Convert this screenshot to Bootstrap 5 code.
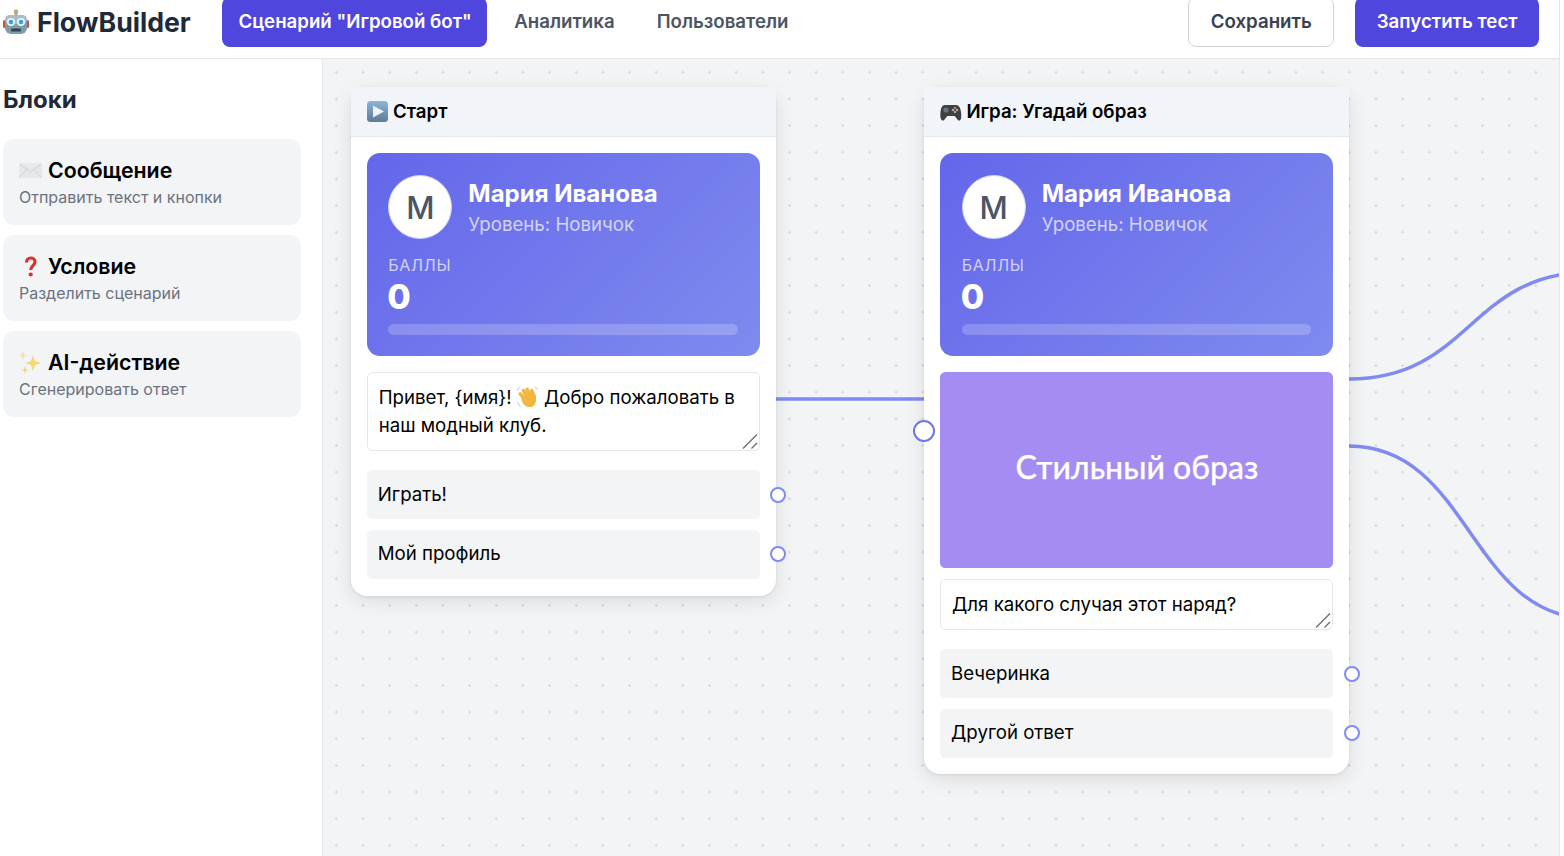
<!DOCTYPE html>
<html lang="ru">
<head>
<meta charset="utf-8">
<title>FlowBuilder</title>
<link href="https://cdn.jsdelivr.net/npm/bootstrap@5.3.0/dist/css/bootstrap.min.css" rel="stylesheet">
<style>
html,body{height:100%;overflow:hidden;background:#fff}
body{font-family:Inter,"Liberation Sans",sans-serif;color:#1f2937}
.app-frame{width:1560px;height:856px;border-right:1px solid #e5e7eb;overflow:hidden}
.top-bar{height:59px;border-bottom:1px solid #e5e7eb;padding:0 20px 0 3px;background:#fff;overflow:hidden}
.logo-mark{font-size:26.67px;font-weight:700;color:#1f2937;width:219px;line-height:1;padding-top:9px;gap:8px}
.top-btn{font-size:18.67px;font-weight:600;height:50px;margin-top:-3px;padding:0 21px;border-radius:8px;display:flex;align-items:center;border:1px solid transparent;line-height:1}
.top-btn.brand{background:#4f46de;color:#fff}
.top-btn.brand.scenario{padding:0 14.5px 0 15.5px}
.top-btn.plain{color:#4b5563;padding:0 21px;background:none}
.top-btn.plain.after-brand{margin-left:5px;padding-right:19px}
.top-btn.outline{background:#fff;border-color:#d1d5db;color:#374151;padding:0 21.5px}
.top-btn.launch{margin-left:21px;padding:0 20.5px}
.work-area{height:797px}
.side-panel{width:323px;border-right:1px solid #e5e7eb;padding:0 21px 0 3px;background:#fff;flex:none}
.side-title{font-size:24px;font-weight:700;line-height:1;margin:29px 0 27px;color:#1f2937;height:24px}
.block-item{background:#f3f4f6;border-radius:10.67px;height:86px;padding:16px 16px 0;margin-bottom:10px}
.block-name{font-size:21.33px;font-weight:600;color:#000;line-height:30px;gap:6px}
.block-icon{width:23px;height:23px;flex:none}
.block-sub{font-size:16px;color:#6b7280;line-height:24px}
.flow-canvas{position:relative;flex:1;background-color:#f3f4f6;background-image:radial-gradient(circle,#d3d6db 1.2px,transparent 1.4px);background-size:26.667px 26.667px;overflow:hidden}
.wire-layer{position:absolute;left:0;top:0;width:1236px;height:797px}
.flow-node{position:absolute;width:425px;background:#fff;border-radius:16px;box-shadow:0 5px 20px rgba(0,0,0,.1),0 1px 3px rgba(0,0,0,.08)}
.node-one{left:28px;top:28px;height:509px}
.node-two{left:601.4px;top:28px;height:687px}
.node-head{height:50px;background:#f1f4f9;border-bottom:1px solid #e5e7eb;padding:0 16px;font-size:18.67px;font-weight:600;color:#000;gap:4px}
.node-head svg{width:23px;height:23px;flex:none;margin-left:-1px}
.node-body{padding:16px}
.profile-box{height:203px;border-radius:13px;background:linear-gradient(135deg,#6466ea,#7f8bef);padding:22px 21.33px 0;color:#fff}
.avatar-disc{width:64px;height:64px;border-radius:50%;background:#fff;border:1px solid #c7d2fe;box-shadow:inset 0 0 0 1px #fff;color:#4b5563;font-size:31px;font-weight:500;flex:none;line-height:1;padding-top:1px}
.profile-name{font-size:24px;font-weight:700;line-height:32px;margin-top:3px}
.profile-level{font-size:18.67px;line-height:28px;margin-top:1px;color:rgba(255,255,255,.7)}
.score-label{font-size:16px;letter-spacing:.7px;line-height:20px;margin-top:16px;color:rgba(255,255,255,.7)}
.score-value{font-size:34px;font-weight:800;line-height:42px;margin-top:1px;margin-left:-1px}
.score-track{height:11px;border-radius:6px;background:rgba(255,255,255,.2);margin-top:6px;margin-right:1px}
.msg-field{position:relative;border:1px solid #e5e7eb;border-radius:5.33px;background:#fff;margin-top:16px;padding:11px 10.67px 0;font-size:18.67px;line-height:28px;color:#000}
.msg-long{height:79px}
.msg-short{height:51px;margin-top:11px}
.grip-mark{position:absolute;right:1px;bottom:1px;width:16px;height:16px}
.hand-mark{width:22px;height:22px;vertical-align:-4px}
.choice-row{position:relative;height:49px;background:#f3f4f6;border-radius:5.33px;padding:0 10.67px;font-size:18.67px;line-height:48.4px;color:#000;margin-top:10.67px}
.choice-row.first-one{margin-top:19px;line-height:49px}
.choice-port{position:absolute;right:-26.33px;top:16.5px;width:16px;height:16px;border-radius:50%;background:#fff;border:2px solid #7f8bf2}
.entry-port{position:absolute;left:-11px;top:333px;width:22px;height:22px;border-radius:50%;background:#fff;border:2.67px solid #6f73ee}
.picture-box{height:196px;background:#a58cf3;border-radius:5.33px;margin-top:16px;padding-bottom:6px;color:#fff;font-family:Lato,sans-serif;font-size:32px;font-weight:500;-webkit-text-stroke:.25px #fff}
</style>
</head>
<body>
<div class="app-frame">
  <header class="top-bar d-flex align-items-start">
    <div class="logo-mark d-flex align-items-center">
      <svg width="26" height="26" viewBox="0 0 26 26"><rect x="0" y="11" width="3" height="8" rx="1.5" fill="#c8523c"/><rect x="23" y="11" width="3" height="8" rx="1.5" fill="#c8523c"/><circle cx="13" cy="2.500" r="2.200" fill="#e8a33d"/><rect x="11.500" y="3" width="3" height="4" fill="#9aa9b2"/><rect x="2" y="6" width="22" height="19" rx="6" fill="#7f9cab"/><rect x="2" y="6" width="22" height="9" rx="5" fill="#a9bcc6"/><circle cx="8" cy="13" r="4" fill="#e9f2f6"/><circle cx="18" cy="13" r="4" fill="#e9f2f6"/><circle cx="8" cy="13" r="2.300" fill="#2fa8d8"/><circle cx="18" cy="13" r="2.300" fill="#2fa8d8"/><rect x="8" y="19.500" width="10" height="3" rx="1" fill="#33454f"/></svg>
      <span>FlowBuilder</span>
    </div>
    <a class="top-btn brand scenario text-decoration-none">Сценарий "Игровой бот"</a>
    <a class="top-btn plain after-brand text-decoration-none">Аналитика</a>
    <a class="top-btn plain text-decoration-none">Пользователи</a>
    <button type="button" class="top-btn outline ms-auto">Сохранить</button>
    <button type="button" class="top-btn brand launch">Запустить тест</button>
  </header>
  <div class="work-area d-flex">
    <aside class="side-panel">
      <h2 class="side-title">Блоки</h2>
      <div class="block-item">
        <div class="block-name d-flex align-items-center">
          <svg class="block-icon" viewBox="0 0 23 23"><rect x="0" y="4" width="23" height="15" rx="1.500" fill="#e7e8ea"/><path d="M.5 5 11.500 13 22.500 5M.5 18.500 8 10M22.500 18.500 15 10" fill="none" stroke="#cfd1d5"/></svg>
          <span>Сообщение</span>
        </div>
        <div class="block-sub">Отправить текст и кнопки</div>
      </div>
      <div class="block-item">
        <div class="block-name d-flex align-items-center">
          <svg class="block-icon" viewBox="0 0 23 23"><path d="M7.500 7.500C7.500 4.500 9.500 3 11.700 3S16 4.500 16 7c0 3.500-4.300 3.700-4.300 8" fill="none" stroke="#d8322a" stroke-width="3.200"/><circle cx="11.700" cy="19.500" r="2.100" fill="#d8322a"/></svg>
          <span>Условие</span>
        </div>
        <div class="block-sub">Разделить сценарий</div>
      </div>
      <div class="block-item">
        <div class="block-name d-flex align-items-center">
          <svg class="block-icon" viewBox="0 0 23 23"><path d="M14 4 16 10 22 12 16 14 14 20 12 14 6 12 12 10Z" fill="#f6d873"/><path d="M4 0 5 3.500 8 4.500 5 5.500 4 9 3 5.500 0 4.500 3 3.500Z" fill="#f8e19a"/><path d="M6 15 6.800 18.200 10 19 6.800 19.800 6 23 5.200 19.800 2 19 5.200 18.200Z" fill="#f3d06a"/></svg>
          <span>AI-действие</span>
        </div>
        <div class="block-sub">Сгенерировать ответ</div>
      </div>
    </aside>
    <main class="flow-canvas">
      <svg class="wire-layer" viewBox="0 0 1236 797" fill="none" stroke="#7f8bf2" stroke-width="3.500">
        <path d="M450 340H604"/>
        <path d="M1026 320C1147 320 1147 213.300 1267 213.300"/>
        <path d="M1026 387C1147 387 1147 559.300 1267 559.300"/>
      </svg>
      <section class="flow-node node-one">
        <div class="node-head d-flex align-items-center">
          <svg viewBox="0 0 23 23"><defs><linearGradient id="playfill" x1="0" y1="0" x2="0" y2="1"><stop offset="0" stop-color="#8fb4d8"/><stop offset="1" stop-color="#5f7a94"/></linearGradient></defs><rect x="1" y="1" width="21" height="21" rx="3.500" fill="url(#playfill)"/><path d="M7 5.500 18 11.500 7 17.500Z" fill="#eef3f8"/></svg>
          <span>Старт</span>
        </div>
        <div class="node-body">
          <div class="profile-box">
            <div class="d-flex gap-3">
              <div class="avatar-disc d-flex align-items-center justify-content-center">M</div>
              <div>
                <div class="profile-name">Мария Иванова</div>
                <div class="profile-level">Уровень: Новичок</div>
              </div>
            </div>
            <div class="score-label">БАЛЛЫ</div>
            <div class="score-value">0</div>
            <div class="score-track"></div>
          </div>
          <div class="msg-field msg-long">
            <div>Привет, {имя}! <svg class="hand-mark" viewBox="0 0 24 24"><g stroke="#f2b63f" stroke-width="3.800" stroke-linecap="round"><path d="M8 14 3.500 8.500M11.500 13 7 5M15 12 11 3.500M19 12 16 5"/></g><path d="M5 12C4 18 9 23.500 14.500 23s7-6 6-12.500l-3.500 2-6-1Z" fill="#f2b63f"/><path d="M1 18c.5 2 1.500 3.500 3 4.500M.5 5C1 3 2 2 3.500 1M19.500 1c1.500.5 2.500 1.500 3 3" stroke="#b9bdc4" fill="none"/></svg> <span>Добро пожаловать в</span></div>
            <div>наш модный клуб.</div>
            <svg class="grip-mark" viewBox="0 0 16 16"><path d="M1 15.500 15 1.500M9.500 15.500 15 10" stroke="#6b6b6b" stroke-width="1.300"/></svg>
          </div>
          <div class="choice-row first-one">Играть!<span class="choice-port"></span></div>
          <div class="choice-row">Мой профиль<span class="choice-port"></span></div>
        </div>
      </section>
      <section class="flow-node node-two">
        <span class="entry-port"></span>
        <div class="node-head d-flex align-items-center">
          <svg viewBox="0 0 23 23"><path d="M6 5h11c3 0 4.500 3 5 7 .5 4 .5 8-1.500 8.500-2 .5-3.500-3.500-5-4.500H8.500c-1.500 1-3 5-5 4.500S1 16 1.500 12C2 8 3 5 6 5Z" fill="#3d4142"/><circle cx="7" cy="10" r="2.600" fill="#6e7374"/><circle cx="16" cy="8" r="1.200" fill="#e8743b"/><circle cx="18" cy="10" r="1.200" fill="#a9adad"/><circle cx="14" cy="10" r="1.200" fill="#a9adad"/><circle cx="16" cy="12" r="1.200" fill="#a9adad"/></svg>
          <span>Игра: Угадай образ</span>
        </div>
        <div class="node-body">
          <div class="profile-box">
            <div class="d-flex gap-3">
              <div class="avatar-disc d-flex align-items-center justify-content-center">M</div>
              <div>
                <div class="profile-name">Мария Иванова</div>
                <div class="profile-level">Уровень: Новичок</div>
              </div>
            </div>
            <div class="score-label">БАЛЛЫ</div>
            <div class="score-value">0</div>
            <div class="score-track"></div>
          </div>
          <div class="picture-box d-flex align-items-center justify-content-center">Стильный образ</div>
          <div class="msg-field msg-short">Для какого случая этот наряд?
            <svg class="grip-mark" viewBox="0 0 16 16"><path d="M1 15.500 15 1.500M9.500 15.500 15 10" stroke="#6b6b6b" stroke-width="1.300"/></svg>
          </div>
          <div class="choice-row first-one">Вечеринка<span class="choice-port"></span></div>
          <div class="choice-row">Другой ответ<span class="choice-port"></span></div>
        </div>
      </section>
    </main>
  </div>
</div>
<script src="https://cdn.jsdelivr.net/npm/bootstrap@5.3.0/dist/js/bootstrap.bundle.min.js"></script>
</body>
</html>
